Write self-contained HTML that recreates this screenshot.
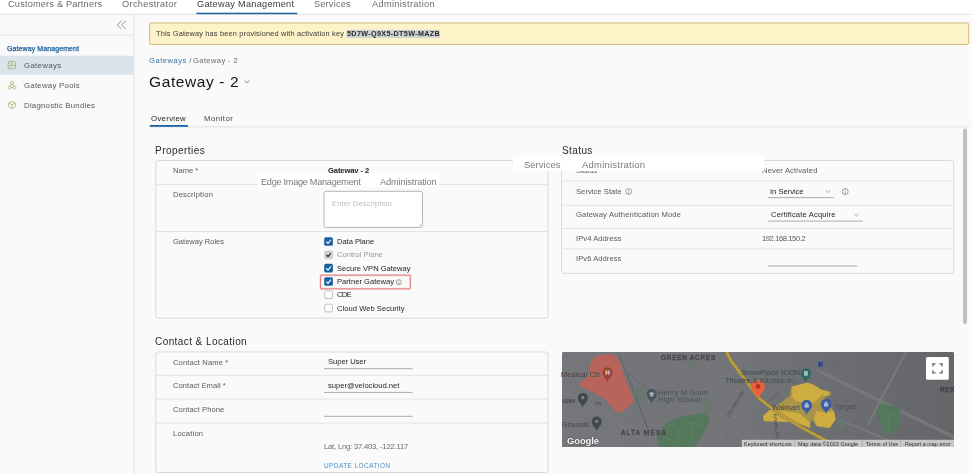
<!DOCTYPE html>
<html><head><meta charset="utf-8"><title>Gateway - 2</title>
<style>
*{box-sizing:border-box;margin:0;padding:0}
html,body{width:972px;height:474px;overflow:hidden;background:#fafafa;font-family:"Liberation Sans",sans-serif;color:#333}
.a{position:absolute;white-space:nowrap;line-height:1}
.b{position:absolute}
.card{border:1px solid #dadada;border-radius:3px;background:#fafafa}
.hr{height:1px;background:#e2e2e2}
.cb{width:8.6px;height:8.6px;border-radius:1.5px;background:#1763a6}
.cbg{width:8.6px;height:8.6px;border-radius:1.5px;background:#cfcfcf}
.cbe{width:8.6px;height:8.6px;border-radius:1.5px;background:#fff;border:1px solid #a8a8a8}
.ul{height:1px;background:#9a9a9a}
</style></head><body>
<!-- top nav + sidebar -->
<div class="b" style="left:0;top:0;width:972px;height:14px;background:#fff"></div>
<svg class="b" style="left:0;top:0;z-index:1" width="972" height="474" viewBox="0 0 972 474" fill="none">
<path d="M0 14.3 H972" stroke="#e2e2e2" stroke-width="1"/>
<rect x="196.3" y="12.7" width="101" height="1.5" fill="#1763a6"/>
<path d="M133.9 14.8 V474" stroke="#e3e3e3" stroke-width="1.3"/>
<path d="M0 35.2 H133.3" stroke="#e2e2e2" stroke-width="1"/>
<rect x="0" y="55.7" width="133.3" height="19" fill="#d8e3ea"/>
<rect x="149.6" y="23" width="819.1" height="21.4" rx="1.5" fill="#fef2c9" stroke="#d0b981" stroke-width="1"/>
<rect x="346.5" y="29.8" width="93.2" height="8.1" fill="#cdd1d1"/>
<path d="M149 126.9 H969" stroke="#e0e0e0" stroke-width="1"/>
<rect x="149.9" y="125" width="38.1" height="1.8" fill="#1763a6"/>
<rect x="963" y="128.5" width="4" height="195.5" rx="2" fill="#c1c1c1"/>
<rect x="155.8" y="160.5" width="392.2" height="157.7" rx="2.5" fill="#fafafa" stroke="#d9d9d9" stroke-width="1"/>
<path d="M156.3 184.4 H547.5" stroke="#e4e4e4" stroke-width="1"/>
<path d="M156.3 231.5 H547.5" stroke="#e4e4e4" stroke-width="1"/>
<rect x="324" y="191.3" width="98.5" height="36.2" rx="2.2" fill="#fff" stroke="#adadad" stroke-width="0.9"/>
<rect x="324.2" y="237.25" width="8.7" height="8.6" rx="1.6" fill="#1961a3"/>
<rect x="324.2" y="250.55" width="8.7" height="8.6" rx="1.6" fill="#cdcdcd"/>
<rect x="324.2" y="263.85" width="8.7" height="8.6" rx="1.6" fill="#1961a3"/>
<rect x="324.2" y="277.15" width="8.7" height="8.6" rx="1.6" fill="#1961a3"/>
<rect x="324.65" y="290.90" width="7.8" height="7.7" rx="1.5" fill="#fff" stroke="#b8b8b8" stroke-width="0.9"/>
<rect x="324.65" y="304.20" width="7.8" height="7.7" rx="1.5" fill="#fff" stroke="#b8b8b8" stroke-width="0.9"/>
<path d="M326.3 241.65 L328 243.45 L331 239.75" stroke="#fff" stroke-width="1.15"/>
<path d="M326.5 254.95 L328 256.55 L330.8 253.25" stroke="#222" stroke-width="1.15"/>
<path d="M326.3 268.25 L328 270.05 L331 266.35" stroke="#fff" stroke-width="1.15"/>
<path d="M326.3 281.55 L328 283.35 L331 279.65" stroke="#fff" stroke-width="1.15"/>
<rect x="320.5" y="275.2" width="89.8" height="13.6" rx="0.8" stroke="#e88e8e" stroke-width="2.2" opacity="0.35"/>
<rect x="320.5" y="275.2" width="89.8" height="13.6" rx="0.8" stroke="#e27878" stroke-width="0.9"/>
<path d="M418.6 226.2 L421.2 223.6 M420.2 226.4 L421.4 225.2" stroke="#999" stroke-width="0.5"/>
<rect x="561.6" y="160.5" width="392.1" height="112.8" rx="2.5" fill="#fafafa" stroke="#d9d9d9" stroke-width="1"/>
<path d="M562.1 180.9 H953.2" stroke="#e4e4e4" stroke-width="1"/>
<path d="M562.1 205.3 H953.2" stroke="#e4e4e4" stroke-width="1"/>
<path d="M562.1 228.5 H953.2" stroke="#e4e4e4" stroke-width="1"/>
<path d="M562.1 248.9 H953.2" stroke="#e4e4e4" stroke-width="1"/>
<path d="M768 197.6 H833.9" stroke="#ababab" stroke-width="1"/>
<path d="M768 221.1 H862.6" stroke="#ababab" stroke-width="1"/>
<path d="M768 266 H857.2" stroke="#ababab" stroke-width="1"/>
<rect x="155.8" y="352" width="392.2" height="120.5" rx="2.5" fill="#fafafa" stroke="#d9d9d9" stroke-width="1"/>
<path d="M156.3 375.4 H547.5" stroke="#e4e4e4" stroke-width="1"/>
<path d="M156.3 399.1 H547.5" stroke="#e4e4e4" stroke-width="1"/>
<path d="M156.3 423.2 H547.5" stroke="#e4e4e4" stroke-width="1"/>
<path d="M324 368.7 H412.6" stroke="#ababab" stroke-width="1"/>
<path d="M324 392.4 H412.6" stroke="#ababab" stroke-width="1"/>
<path d="M324 416.3 H412.6" stroke="#ababab" stroke-width="1"/>
</svg>
<!-- map -->
<svg class="b" style="left:562px;top:352px" width="392" height="95.3" viewBox="562 352 392 95.3">
<defs><linearGradient id="mg" x1="0" x2="1" y1="0" y2="0"><stop offset="0" stop-color="#747679"/><stop offset="0.45" stop-color="#727477"/><stop offset="0.75" stop-color="#6a6c6f"/><stop offset="1" stop-color="#646669"/></linearGradient></defs>
<rect x="562" y="352" width="392" height="96" rx="1.5" fill="url(#mg)"/>
<!-- lighter roads -->
<g stroke="#76787b" fill="none" stroke-linecap="round">
<path d="M817 370 L880 401 L954 437" stroke-width="3.2"/>
<path d="M906 352 L880 401 L868 425" stroke-width="2.2"/>
<path d="M562 392 L585 400 L610 420 L640 436 L660 447" stroke-width="3"/>
<path d="M700 352 L716 380 L722 412 L720 447" stroke-width="1.6"/>
<path d="M742 420 L760 447" stroke-width="1.6"/>
<path d="M840 420 L905 447" stroke-width="2"/>
</g>
<!-- greens -->
<g fill="#55785d">
<path d="M657.1 436.6 L664 425 L675.6 418.1 L694.2 414.6 L705.8 412.3 L710 419.2 L703.5 433.2 L694.2 448 L659.4 448Z"/>
<path d="M879.9 403 L900.8 408.1 L898.5 429 L885.7 435 L877.1 414.6Z"/>
</g>
<g fill="#68786d">
<path d="M702.3 399.5 L710.5 397.2 L710.9 411.1 L703.5 412.3Z"/>
<path d="M688 361 L696 366 L694 370 L687 365Z"/>
<path d="M636 386 L646 389 L643 402 L636 400Z"/>
<path d="M838 420 L845 421 L843 428 L837 427Z"/>
</g>
<g stroke="#6f8f76" stroke-width="0.5" fill="none" opacity="0.8">
<path d="M668 424 L680 430 L690 422 L702 426 M680 430 L676 444 M690 422 L694 436 L688 446 M664 436 L676 444"/>
<path d="M881 406 L890 416 L896 412 M890 416 L888 430 M883 420 L890 416"/>
</g>
<!-- red campus -->
<path d="M595.8 356.1 L604.1 354.5 L614.6 354.9 L619.8 362.8 L623.1 372.8 L629.8 390.7 L633.9 400.8 L630.9 404.6 L623.1 410.9 L618.6 413.1 L614.6 410.4 L609.7 404.6 L604.1 398.6 L596.3 394.1 L589.6 390.7 L582.8 387.4 L578.4 384 L584 379.6 L589.6 374 L589.6 366.1 L591.8 360.5Z" fill="#b9645a"/>
<!-- dark line -->
<path d="M618.8 354.3 L626 372 L640 408 L647.8 428.5" stroke="#55585c" stroke-width="0.7" fill="none"/>
<path d="M626 372 L652 392" stroke="#5c5f63" stroke-width="0.6" fill="none"/>
<!-- yellow area -->
<path d="M791.1 386.4 L807.3 382.4 L813.4 384.4 L821.5 389.5 L830.6 391.5 L830.6 395.5 L824.6 397.6 L829.6 404.7 L834.7 412.8 L835.7 419.8 L829.6 428.6 L816.5 426.5 L812.4 419.8 L810.4 421.9 L810.4 428.6 L795.2 422.5 L763.8 421.3 L762.8 415.8 L769.9 409.7 L781.0 402.6 L790.1 395.5Z" fill="#a8944a"/>
<path d="M792.2 386.8 L807.3 382.8 L813.4 384.8 L821.5 389.9 L829.6 391.9 L827.2 395.5 L821.5 395.5 L816.5 400.6 L813.4 403.0 L801.3 402.6 L795.2 400.6 L792.2 397.0Z M816.5 410.7 L825.6 412.8 L833.7 411.1 L835.3 419.2 L829.6 427.7 L817.1 425.7 L813.8 418.8Z M763.2 416.0 L769.9 410.3 L785.1 411.1 L799.2 413.2 L810.0 422.3 L810.0 427.7 L795.2 421.9 L764.0 420.9Z" fill="#ceae40"/>
<!-- yellow road -->
<path d="M726.5 352 L731.4 361.2 L745.3 379.8 L759.3 398.4 L780.2 414.6 L803.4 428.5 L824.2 439.7 L840 448" stroke="#94803a" stroke-width="3.6" fill="none"/>
<path d="M726.5 352 L731.4 361.2 L745.3 379.8 L759.3 398.4 L780.2 414.6 L803.4 428.5 L824.2 439.7 L840 448" stroke="#bb9e3e" stroke-width="2.3" fill="none"/>
<!-- pins -->
<g>
<path d="M607.5 382 C606 377.5 602.4 376.5 602.4 372.4 A5.1 5.1 0 1 1 612.6 372.4 C612.6 376.5 609 377.5 607.5 382Z" fill="#9c4239"/>
<path d="M582.8 407.5 C581.3 403 577.8 402 577.8 397.9 A5 5 0 1 1 587.8 397.9 C587.8 402 584.3 403 582.8 407.5Z" fill="#42474b"/>
<circle cx="582.8" cy="397.6" r="1.6" fill="#7f8386"/>
<path d="M596.7 431.2 C595.2 426.7 591.7 425.7 591.7 421.6 A5 5 0 1 1 601.7 421.6 C601.7 425.7 598.2 426.7 596.7 431.2Z" fill="#42474b"/>
<circle cx="596.7" cy="421.3" r="1.6" fill="#7f8386"/>
<path d="M651.7 403.6 C650.2 399.1 646.7 398.1 646.7 394 A5 5 0 1 1 656.7 394 C656.7 398.1 653.2 399.1 651.7 403.6Z" fill="#475459"/>
<path d="M648.6 393.4 L651.7 391.8 L654.8 393.4 L651.7 395 Z M649.8 394.6 V396 Q651.7 397.2 653.6 396 V394.6" fill="#a9b0b3"/>
<path d="M805.9 382.6 C804.4 378.1 800.9 377.9 800.9 373.4 A5 5 0 1 1 810.9 373.4 C810.9 377.9 807.4 378.1 805.9 382.6Z" fill="#2e6763"/>
<rect x="804" y="371" width="3.8" height="4.8" rx="0.5" fill="#a5bdbb"/>
<path d="M806.7 414.9 C805.2 410.4 801.4000000000001 409.7 801.4000000000001 405 A5.3 5.3 0 1 1 812.0 405 C812.0 409.7 808.2 410.4 806.7 414.9Z" fill="#3b5ba5"/>
<path d="M804.7 404.2 H808.7 V407.4 H804.7Z M805.7 404.2 V403.4 A1 1 0 0 1 807.7 403.4 V404.2" fill="#aeb9d6" stroke="#aeb9d6" stroke-width="0.3"/>
<path d="M826.1 413.9 C824.6 409.4 820.8000000000001 408.7 820.8000000000001 404 A5.3 5.3 0 1 1 831.4 404 C831.4 408.7 827.6 409.4 826.1 413.9Z" fill="#3b5ba5"/>
<path d="M824.1 403.2 H828.1 V406.4 H824.1Z M825.1 403.2 V402.4 A1 1 0 0 1 827.1 402.4 V403.2" fill="#aeb9d6" stroke="#aeb9d6" stroke-width="0.3"/>
</g>
<text x="607.5" y="374.6" font-family="Liberation Sans, sans-serif" font-size="6.4" font-weight="bold" fill="#e8d8d6" text-anchor="middle">H</text>
<text transform="translate(736.6 404.5) rotate(-58)" font-family="Liberation Sans, sans-serif" font-size="5" fill="#484a4e" text-anchor="middle">Los Altos Ave</text>
<text transform="translate(774.6 426) rotate(84)" font-family="Liberation Sans, sans-serif" font-size="5" fill="#484a4e" text-anchor="middle">Antonio Rd</text>
<path d="M766.8 402.8 L778.8 392.6" stroke="#565c58" stroke-width="0.8"/>
<!-- small blue square icon -->
<rect x="817.6" y="361.2" width="5.6" height="6" rx="0.6" fill="#384a86" stroke="#7d87a8" stroke-width="0.5"/>
<path d="M832 364 L836 361.5 L840 366 L835.5 369Z" fill="none" stroke="#5a5d61" stroke-width="0.6"/>
<!-- location pin -->
<path d="M758.1 399.6 C756.4 393.4 751.4 392.2 751.4 386.6 A6.7 6.7 0 1 1 764.8 386.6 C764.8 392.2 759.8 393.4 758.1 399.6Z" fill="#ee5e3d"/>
<circle cx="758.1" cy="386.4" r="2.3" fill="#a8331f"/>
<!-- fullscreen -->
<rect x="926" y="357" width="22.8" height="22.8" rx="1.5" fill="#fff"/>
<path d="M932.9 366.5 V363.9 H935.5 M939.5 363.9 H942.1 V366.5 M942.1 370.3 V372.9 H939.5 M935.5 372.9 H932.9 V370.3" stroke="#585858" stroke-width="1.15" fill="none"/>
<!-- attribution -->
<rect x="741.8" y="439.8" width="212.2" height="8" fill="#c9c9c9"/>
<path d="M794.8 439.8 V448 M862.3 439.8 V448 M900.7 439.8 V448" stroke="#a9a9a9" stroke-width="0.8"/>
</svg>
<!-- icons -->
<svg class="b" style="left:0;top:0;z-index:3" width="972" height="474" viewBox="0 0 972 474" fill="none">
<!-- collapse -->
<path d="M121.5 20.7 L117.2 24.9 L121.5 29.1 M125.9 20.7 L121.6 24.9 L125.9 29.1" stroke="#8c8c8c" stroke-width="0.9"/>
<!-- sidebar icons -->
<g stroke="#98b46b" stroke-width="0.75">
<rect x="8.2" y="61.5" width="7.3" height="7.3" rx="0.8"/>
<path d="M12 61.5 V65.4 M10 65.4 H15.5 M10 65.4 V68.8 M8.2 63.6 H10.2"/>
<circle cx="12" cy="82.9" r="1.5"/><circle cx="9.6" cy="87.5" r="1.5"/><circle cx="14.5" cy="87.5" r="1.5"/>
<path d="M11.3 84.3 L10.3 86.1 M12.7 84.3 L13.8 86.1 M11.1 87.5 H13"/>
<path d="M12 101.3 L15.3 103.1 V106.9 L12 108.7 L8.7 106.9 V103.1 Z M8.7 103.1 L12 104.9 L15.3 103.1 M12 104.9 V108.7"/>
</g>
<!-- title chevron -->
<path d="M244.7 80.6 L247 82.9 L249.3 80.6" stroke="#666" stroke-width="0.8"/>
<!-- select chevrons -->
<path d="M825.9 190.4 L828.1 192.5 L830.3 190.4 M854.2 214 L856.4 216.1 L858.6 214" stroke="#8c8c8c" stroke-width="0.7"/>
<!-- info icons -->
<g stroke="#6e6e6e" stroke-width="0.65">
<circle cx="398.8" cy="282.2" r="2.6"/><path d="M398.8 281.7 V284 M398.8 280.4 V281"/>
<circle cx="628.6" cy="191.6" r="2.9"/><path d="M628.6 191.1 V193.6 M628.6 189.7 V190.4"/>
<circle cx="845.2" cy="191.6" r="3"/><path d="M845.2 191.1 V193.7 M845.2 189.6 V190.4"/>
</g>
</svg>

<!-- text -->
<div class="b" style="left:0;top:0;width:972px;height:474px;will-change:transform;z-index:7">
<!-- ghost overlays -->
<div class="b" style="left:257.8px;top:173.2px;width:181.2px;height:13.7px;background:#fff;z-index:4"></div>
<div class="b" style="left:513.2px;top:156px;width:250.6px;height:15.3px;background:#fff;z-index:4"></div>
<div class="a" style="left:7.70px;top:0px;font-size:9.2px;color:#6b6b6b;letter-spacing:0.194px;transform:translateY(0.40px) rotate(0.01deg)">Customers &amp; Partners</div>
<div class="a" style="left:121.90px;top:0px;font-size:9.2px;color:#6b6b6b;letter-spacing:0.347px;transform:translateY(0.40px) rotate(0.01deg)">Orchestrator</div>
<div class="a" style="left:197.30px;top:0px;font-size:9.2px;color:#3a3a3a;letter-spacing:0.270px;transform:translateY(0.40px) rotate(0.01deg)">Gateway Management</div>
<div class="a" style="left:314.30px;top:0px;font-size:9.2px;color:#6b6b6b;letter-spacing:0.192px;transform:translateY(0.40px) rotate(0.01deg)">Services</div>
<div class="a" style="left:372.00px;top:0px;font-size:9.2px;color:#6b6b6b;letter-spacing:0.335px;transform:translateY(0.40px) rotate(0.01deg)">Administration</div>
<div class="a" style="left:6.85px;top:44px;font-size:7px;color:#1b5f9e;letter-spacing:0.091px;transform:translateY(0.90px) rotate(0.01deg);-webkit-text-stroke:0.25px #1b5f9e">Gateway Management</div>
<div class="a" style="left:23.90px;top:61px;font-size:7.8px;color:#565656;letter-spacing:0.341px;transform:translateY(0.80px) rotate(0.01deg)">Gateways</div>
<div class="a" style="left:23.90px;top:81px;font-size:7.8px;color:#565656;letter-spacing:0.266px;transform:translateY(0.80px) rotate(0.01deg)">Gateway Pools</div>
<div class="a" style="left:23.90px;top:101px;font-size:7.8px;color:#565656;letter-spacing:0.248px;transform:translateY(0.90px) rotate(0.01deg)">Diagnostic Bundles</div>
<div class="a" style="left:155.85px;top:30px;font-size:7.4px;color:#3a3a3a;letter-spacing:0.161px;transform:translateY(0.40px) rotate(0.01deg)">This Gateway has been provisioned with activation key</div>
<div class="a" style="left:346.85px;top:30px;font-size:7.2px;color:#2a2a2a;letter-spacing:0.354px;transform:translateY(0.40px) rotate(0.01deg);font-weight:bold">5D7W-Q9X5-DT5W-MAZB</div>
<div class="a" style="left:148.65px;top:56px;font-size:7.6px;color:#3a70a8;letter-spacing:0.500px;transform:translateY(0.70px) rotate(0.01deg)">Gateways /</div>
<div class="a" style="left:193.05px;top:56px;font-size:7.6px;color:#6a6a6a;letter-spacing:0.375px;transform:translateY(0.70px) rotate(0.01deg)">Gateway - 2</div>
<div class="a" style="left:148.75px;top:73px;font-size:15.5px;color:#161616;letter-spacing:0.601px;transform:translateY(0.90px) rotate(0.01deg)">Gateway - 2</div>
<div class="a" style="left:150.85px;top:114px;font-size:7.8px;color:#1c1c1c;letter-spacing:0.314px;transform:translateY(0.70px) rotate(0.01deg)">Overview</div>
<div class="a" style="left:203.70px;top:114px;font-size:7.8px;color:#444;letter-spacing:0.468px;transform:translateY(0.70px) rotate(0.01deg)">Monitor</div>
<div class="a" style="left:154.55px;top:145px;font-size:10px;color:#2a2a2a;letter-spacing:0.459px;transform:translateY(0.80px) rotate(0.01deg)">Properties</div>
<div class="a" style="left:561.50px;top:145px;font-size:10px;color:#2a2a2a;letter-spacing:0.400px;transform:translateY(0.80px) rotate(0.01deg)">Status</div>
<div class="a" style="left:155.30px;top:337px;font-size:10px;color:#2a2a2a;letter-spacing:0.422px;transform:translateY(0.30px) rotate(0.01deg)">Contact &amp; Location</div>
<div class="a" style="left:172.70px;top:167px;font-size:7.6px;color:#5a5a5a;letter-spacing:-0.031px;transform:translateY(0.25px) rotate(0.01deg)">Name *</div>
<div class="a" style="left:328.25px;top:167px;font-size:7.6px;color:#222;letter-spacing:-0.109px;transform:translateY(0.25px) rotate(0.01deg);font-weight:bold">Gateway - 2</div>
<div class="a" style="left:172.70px;top:191px;font-size:7.6px;color:#5a5a5a;letter-spacing:0.187px;transform:translateY(0.25px) rotate(0.01deg)">Description</div>
<div class="a" style="left:331.50px;top:199px;font-size:7.6px;color:#bdbdbd;letter-spacing:0.098px;transform:translateY(0.75px) rotate(0.01deg)">Enter Description</div>
<div class="a" style="left:173.45px;top:238px;font-size:7.6px;color:#5a5a5a;letter-spacing:-0.033px;transform:translateY(0.25px) rotate(0.01deg)">Gateway Roles</div>
<div class="a" style="left:336.50px;top:238px;font-size:7.6px;color:#262626;letter-spacing:-0.043px;transform:translateY(0.10px) rotate(0.01deg)">Data Plane</div>
<div class="a" style="left:336.50px;top:251px;font-size:7.6px;color:#9a9a9a;letter-spacing:-0.017px;transform:translateY(0.40px) rotate(0.01deg)">Control Plane</div>
<div class="a" style="left:336.50px;top:264px;font-size:7.6px;color:#262626;letter-spacing:-0.019px;transform:translateY(0.70px) rotate(0.01deg)">Secure VPN Gateway</div>
<div class="a" style="left:336.50px;top:278px;font-size:7.6px;color:#262626;letter-spacing:0.003px;transform:translateY(0.00px) rotate(0.01deg)">Partner Gateway</div>
<div class="a" style="left:336.50px;top:291px;font-size:7.6px;color:#262626;letter-spacing:-0.716px;transform:translateY(0.30px) rotate(0.01deg)">CDE</div>
<div class="a" style="left:336.50px;top:304px;font-size:7.6px;color:#262626;letter-spacing:0.031px;transform:translateY(0.60px) rotate(0.01deg)">Cloud Web Security</div>
<div class="a" style="left:261.35px;top:178px;font-size:9.2px;color:#7a7a7a;letter-spacing:-0.295px;transform:translateY(0.00px) rotate(0.01deg);z-index:5">Edge Image Management</div>
<div class="a" style="left:379.80px;top:178px;font-size:9.2px;color:#7a7a7a;letter-spacing:-0.121px;transform:translateY(0.00px) rotate(0.01deg);z-index:5">Administration</div>
<div class="a" style="left:524.10px;top:159px;font-size:9.5px;color:#7a7a7a;letter-spacing:0.002px;transform:translateY(0.60px) rotate(0.01deg);z-index:5">Services</div>
<div class="a" style="left:582.00px;top:159px;font-size:9.5px;color:#7a7a7a;letter-spacing:0.218px;transform:translateY(0.60px) rotate(0.01deg);z-index:5">Administration</div>
<div class="a" style="left:576.10px;top:167px;font-size:7.6px;color:#5a5a5a;letter-spacing:-0.092px;transform:translateY(0.25px) rotate(0.01deg)">Status</div>
<div class="a" style="left:761.90px;top:167px;font-size:7.6px;color:#5a5a5a;letter-spacing:0.156px;transform:translateY(0.25px) rotate(0.01deg)">Never Activated</div>
<div class="a" style="left:576.10px;top:187px;font-size:7.6px;color:#5a5a5a;letter-spacing:0.045px;transform:translateY(0.65px) rotate(0.01deg)">Service State</div>
<div class="a" style="left:770.35px;top:187px;font-size:7.6px;color:#262626;letter-spacing:-0.019px;transform:translateY(0.65px) rotate(0.01deg)">In Service</div>
<div class="a" style="left:575.85px;top:211px;font-size:7.6px;color:#5a5a5a;letter-spacing:0.157px;transform:translateY(0.35px) rotate(0.01deg)">Gateway Authentication Mode</div>
<div class="a" style="left:771.10px;top:211px;font-size:7.6px;color:#262626;letter-spacing:0.155px;transform:translateY(0.35px) rotate(0.01deg)">Certificate Acquire</div>
<div class="a" style="left:576.15px;top:235px;font-size:7.6px;color:#5a5a5a;letter-spacing:0.056px;transform:translateY(0.05px) rotate(0.01deg)">IPv4 Address</div>
<div class="a" style="left:761.90px;top:235px;font-size:7.6px;color:#5a5a5a;letter-spacing:-0.411px;transform:translateY(0.05px) rotate(0.01deg)">192.168.150.2</div>
<div class="a" style="left:576.15px;top:255px;font-size:7.6px;color:#5a5a5a;letter-spacing:0.056px;transform:translateY(0.45px) rotate(0.01deg)">IPv6 Address</div>
<div class="a" style="left:172.70px;top:358px;font-size:7.6px;color:#5a5a5a;letter-spacing:0.132px;transform:translateY(0.55px) rotate(0.01deg)">Contact Name *</div>
<div class="a" style="left:327.50px;top:358px;font-size:7.6px;color:#262626;letter-spacing:-0.040px;transform:translateY(0.05px) rotate(0.01deg)">Super User</div>
<div class="a" style="left:172.70px;top:382px;font-size:7.6px;color:#5a5a5a;letter-spacing:0.030px;transform:translateY(0.25px) rotate(0.01deg)">Contact Email *</div>
<div class="a" style="left:328.25px;top:382px;font-size:7.6px;color:#262626;letter-spacing:-0.002px;transform:translateY(0.25px) rotate(0.01deg)">super@velocloud.net</div>
<div class="a" style="left:172.70px;top:405px;font-size:7.6px;color:#5a5a5a;letter-spacing:0.090px;transform:translateY(0.95px) rotate(0.01deg)">Contact Phone</div>
<div class="a" style="left:172.70px;top:429px;font-size:7.6px;color:#5a5a5a;letter-spacing:0.187px;transform:translateY(0.65px) rotate(0.01deg)">Location</div>
<div class="a" style="left:324.10px;top:443px;font-size:7.6px;color:#6a6a6a;letter-spacing:-0.174px;transform:translateY(0.15px) rotate(0.01deg)">Lat, Lng: 37.403, -122.117</div>
<div class="a" style="left:324.10px;top:462px;font-size:6.4px;color:#4a8fc4;letter-spacing:0.481px;transform:translateY(0.60px) rotate(0.01deg)">UPDATE LOCATION</div>
<div class="a" style="left:561.30px;top:371px;font-size:7.4px;color:#4a3b3b;letter-spacing:0.161px;transform:translateY(0.30px) rotate(0.01deg);z-index:6;text-shadow:0 0 1px rgba(125,127,131,.9)">Medical Ctr</div>
<div class="a" style="left:661.05px;top:355px;font-size:6.4px;color:#3e4043;letter-spacing:0.806px;transform:translateY(0.10px) rotate(0.01deg);z-index:6;-webkit-text-stroke:0.3px #3e4043">GREEN ACRES</div>
<div class="a" style="left:657.90px;top:388px;font-size:7.4px;color:#434b4e;letter-spacing:0.164px;transform:translateY(0.90px) rotate(0.01deg);z-index:6;text-shadow:0 0 1px rgba(125,127,131,.9)">Henry M Gunn</div>
<div class="a" style="left:657.90px;top:396px;font-size:7.4px;color:#434b4e;letter-spacing:0.289px;transform:translateY(0.30px) rotate(0.01deg);z-index:6;text-shadow:0 0 1px rgba(125,127,131,.9)">High School</div>
<div class="a" style="left:621.00px;top:430px;font-size:6.4px;color:#3e4043;letter-spacing:1.275px;transform:translateY(0.00px) rotate(0.01deg);z-index:6;-webkit-text-stroke:0.3px #3e4043">ALTA MESA</div>
<div class="a" style="left:561.60px;top:397px;font-size:7px;color:#3f4246;letter-spacing:-0.514px;transform:translateY(0.00px) rotate(0.01deg);z-index:6;text-shadow:0 0 1px rgba(125,127,131,.9)">ware</div>
<div class="a" style="left:561.85px;top:421px;font-size:7px;color:#3f4246;letter-spacing:0.044px;transform:translateY(0.40px) rotate(0.01deg);z-index:6;text-shadow:0 0 1px rgba(125,127,131,.9)">Grounds</div>
<div class="a" style="left:595.25px;top:400px;font-size:6px;color:#45484c;letter-spacing:0.200px;transform:translateY(0.30px) rotate(0.01deg);z-index:6">cs</div>
<div class="a" style="left:566.50px;top:435px;font-size:9.4px;color:#f4f4f4;letter-spacing:-0.053px;transform:translateY(0.60px) rotate(0.01deg);font-weight:bold;z-index:6;text-shadow:0 0 1.5px rgba(40,40,40,.8)">Google</div>
<div class="a" style="left:740.50px;top:369px;font-size:7.4px;color:#3c4646;letter-spacing:0.122px;transform:translateY(0.20px) rotate(0.01deg);z-index:6;text-shadow:0 0 1px rgba(125,127,131,.9)">ShowPlace ICON</div>
<div class="a" style="left:724.85px;top:376px;font-size:7.4px;color:#3c4646;letter-spacing:0.043px;transform:translateY(0.80px) rotate(0.01deg);z-index:6;text-shadow:0 0 1px rgba(125,127,131,.9)">Theatre &amp; Kitchen in...</div>
<div class="a" style="left:771.60px;top:404px;font-size:7.4px;color:#46464f;letter-spacing:0.115px;transform:translateY(0.00px) rotate(0.01deg);z-index:6">Walmart</div>
<div class="a" style="left:833.85px;top:403px;font-size:7.4px;color:#46464f;letter-spacing:0.269px;transform:translateY(0.30px) rotate(0.01deg);z-index:6;text-shadow:0 0 1px rgba(125,127,131,.9)">Target</div>
<div class="a" style="left:939.50px;top:386px;font-size:6.5px;color:#33363a;letter-spacing:0.483px;transform:translateY(0.60px) rotate(0.01deg);z-index:6;-webkit-text-stroke:0.25px #33363a">REX</div>
<div class="a" style="left:744.10px;top:441px;font-size:5.4px;color:#2c2c2c;letter-spacing:0.075px;transform:translateY(0.70px) rotate(0.01deg);z-index:6">Keyboard shortcuts</div>
<div class="a" style="left:797.90px;top:441px;font-size:5.4px;color:#2c2c2c;letter-spacing:0.063px;transform:translateY(0.70px) rotate(0.01deg);z-index:6">Map data ©2023 Google</div>
<div class="a" style="left:865.65px;top:441px;font-size:5.4px;color:#2c2c2c;letter-spacing:0.035px;transform:translateY(0.70px) rotate(0.01deg);z-index:6">Terms of Use</div>
<div class="a" style="left:904.70px;top:441px;font-size:5.4px;color:#2c2c2c;letter-spacing:0.019px;transform:translateY(0.70px) rotate(0.01deg);z-index:6">Report a map error</div>
</div>
</body></html>
